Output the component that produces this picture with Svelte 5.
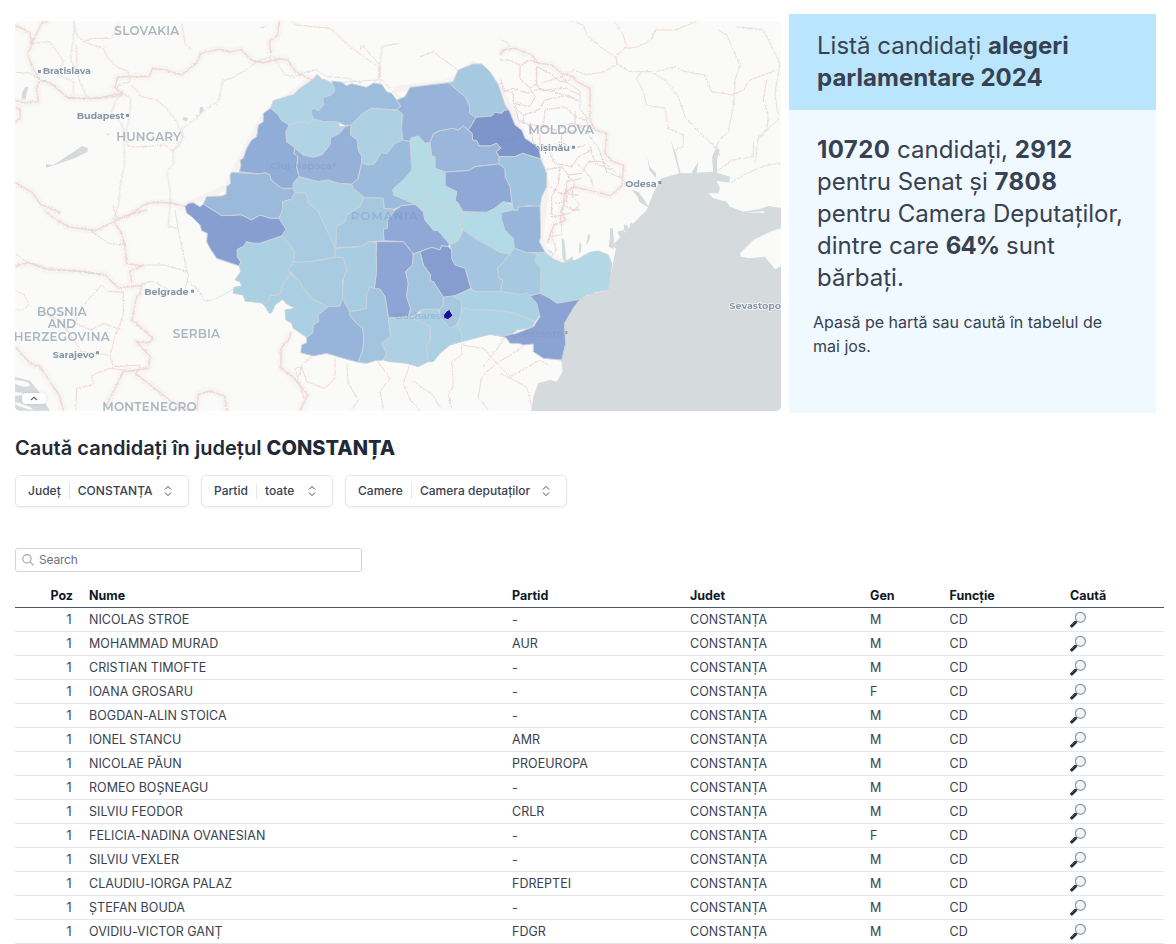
<script>
  const candidates = [
    ['NICOLAS STROE', '-', 'M'],
    ['MOHAMMAD MURAD', 'AUR', 'M'],
    ['CRISTIAN TIMOFTE', '-', 'M'],
    ['IOANA GROSARU', '-', 'F'],
    ['BOGDAN-ALIN STOICA', '-', 'M'],
    ['IONEL STANCU', 'AMR', 'M'],
    ['NICOLAE PĂUN', 'PROEUROPA', 'M'],
    ['ROMEO BOȘNEAGU', '-', 'M'],
    ['SILVIU FEODOR', 'CRLR', 'M'],
    ['FELICIA-NADINA OVANESIAN', '-', 'F'],
    ['SILVIU VEXLER', '-', 'M'],
    ['CLAUDIU-IORGA PALAZ', 'FDREPTEI', 'M'],
    ['ȘTEFAN BOUDA', '-', 'M'],
    ['OVIDIU-VICTOR GANȚ', 'FDGR', 'M'],
  ];

  const filters = [
    ['Județ', 'CONSTANȚA', 174],
    ['Partid', 'toate', 132],
    ['Camere', 'Camera deputaților', 222],
  ];

  // County outlines, grouped by the map quadrant whose origin they use.
  const north = [
    ['#b0d4e6', '272,175 280,152 340,134 360,115 400,88 411,73 425,87 440,91 455,100 465,120 455,135 428,143 431,165 415,183 402,174 392,184 400,207 388,220 355,215 328,225 305,212 295,195'],
    ['#9dbddd', '455,93 485,97 500,107 515,101 560,112 580,99 605,103 620,125 635,130 650,150 662,168 650,180 573,175 545,192 535,205 513,225 495,226 473,216 430,215 400,207 392,184 402,174 415,183 431,165 428,143 455,135 465,120'],
    ['#8fadd6', '272,175 295,195 305,212 328,225 318,245 320,275 345,290 342,310 354,320 350,350 357,380 340,400 340,415 305,415 273,390 270,375 255,368 240,372 178,365 183,345 180,330 190,325 200,295 215,270 230,260 235,225 250,215 250,190'],
    ['#b0d4e6', '328,225 355,215 388,220 400,207 430,215 473,216 480,230 495,230 480,250 452,263 450,285 425,315 400,322 370,315 350,298 320,275 318,245'],
    ['#96b1d8', '495,230 513,225 512,255 532,270 535,300 545,318 545,337 535,385 515,403 475,400 445,390 415,395 357,380 350,350 354,320 342,310 345,295 370,315 400,322 425,315 450,285 452,263 480,250'],
    ['#add1e3', '513,225 535,205 545,192 573,175 650,180 667,178 665,240 668,270 645,280 620,312 603,308 582,343 560,345 545,337 545,318 535,300 532,270 512,255'],
    ['#97b3da', '650,150 675,140 690,112 805,98 855,140 868,165 870,190 888,202 875,225 865,240 850,228 835,240 820,235 780,242 760,252 750,278 735,280 715,258 692,265 690,275 668,270 665,240 667,190 650,180 662,168'],
    ['#a5c9e1', '805,98 820,95 835,60 880,42 905,42 930,65 955,105 975,165 985,180 975,180 965,190 945,187 935,198 888,202 870,190 868,165 855,140'],
    ['#7e95cb', '888,202 935,198 945,187 965,190 975,180 987,180 1005,225 1025,240 1035,265 1065,285 1078,300 1082,327 1028,310 1005,320 957,320 948,305 962,295 950,280 930,288 898,288 890,272 878,270 876,250 865,240 875,225'],
    ['#9ab6db', '750,278 760,252 780,242 820,235 835,240 850,228 865,240 876,250 878,270 890,272 898,288 930,288 950,280 962,295 948,305 957,320 957,342 885,350 865,362 795,366 765,355 765,320 755,318'],
    ['#a0c4df', '957,320 1005,320 1028,310 1082,327 1100,370 1100,410 1085,440 1080,470 1045,467 1015,472 1013,482 1000,480 996,455 990,410 975,380 975,357 957,342'],
    ['#8fa9d6', '795,366 865,362 885,350 957,342 975,357 975,380 990,410 996,460 970,455 945,475 920,487 850,485 825,450 830,425 795,408'],
    ['#b5dbe7', '692,265 715,258 735,280 750,278 755,318 765,320 765,355 795,366 795,408 830,425 825,450 835,460 775,472 755,447 705,463 640,435 638,418 670,390 695,360 690,280'],
    ['#9bbbdc', '668,270 690,275 695,360 670,390 638,418 640,435 705,463 665,467 640,478 612,475 610,445 553,443 520,415 515,403 535,385 545,337 560,345 582,343 603,308 620,312 645,280'],
    ['#9bbadb', '155,367 240,372 255,368 270,375 273,390 305,415 340,415 345,428 335,448 308,455 308,480 297,505 270,505 240,495 215,510 185,495 125,497 70,462 80,440 125,438 138,433 140,410 152,400 150,375'],
    ['#add1e3', '357,380 415,395 445,390 475,400 515,403 520,415 553,443 540,470 500,495 495,515 470,530 468,585 465,595 415,485 385,460 378,430 345,428 340,415 340,400'],
    ['#a5c7e0', '553,443 610,445 612,475 640,478 645,485 622,512 622,535 610,537 612,572 565,575 545,590 475,592 465,595 468,585 470,530 495,515 500,495 540,470'],
    ['#a8cbe2', '345,428 378,430 385,460 415,485 465,595 465,622 395,635 340,637 343,605 332,588 305,558 318,538 297,505 308,480 308,455 335,448'],
    ['#8fa8d6', '612,572 610,537 622,535 622,512 645,480 665,467 705,463 730,485 735,510 760,540 775,542 810,578 805,590 785,587 780,600 755,592 720,605 700,612 670,575'],
    ['#b5dbe7', '705,463 755,447 775,472 835,460 848,485 850,530 835,575 810,585 775,542 760,540 735,510 730,485'],
    ['#b3dae7', '850,487 920,487 945,475 970,455 996,465 1000,478 965,488 965,510 975,540 1000,565 1003,595 990,612 960,608 930,590 880,562 850,540'],
    ['#97b4db', '965,488 1000,480 1013,482 1015,470 1080,468 1082,560 1078,575 1095,607 1040,608 1003,595 1000,565 975,540 965,510'],
    ['#8ca5d4', '590,575 670,575 700,612 698,645 677,665 685,700 680,740 692,775 685,800 625,804 615,740 600,718 583,715 590,660 588,610'],
  ];
  const southWest = [
    ['#869fd0', '15,20 25,10 40,8 60,20 70,12 125,47 185,45 215,60 240,45 270,55 297,55 318,88 305,108 240,130 218,130 200,125 190,140 172,148 172,170 182,185 178,198 140,185 110,175 90,145 80,125 82,100 65,92 60,75 35,50 20,40'],
    ['#abd0e2', '305,108 318,118 332,138 343,155 340,187 325,210 333,222 310,250 300,283 270,288 265,305 250,312 240,308 195,303 190,285 160,280 162,262 185,258 180,245 165,240 182,215 178,198 182,185 172,170 172,148 190,140 200,125 218,130 240,130'],
    ['#abd0e3', '333,222 360,245 370,265 400,298 445,320 415,345 415,365 400,375 398,400 380,412 340,385 335,370 318,360 315,330 345,325 320,312 308,298 285,315 275,338 268,340 250,312 265,305 270,288 300,283 310,250'],
    ['#a8cde2', '465,145 545,140 565,125 590,127 588,160 590,210 583,267 570,260 560,325 530,333 508,333 487,295 490,235 500,210 490,172 465,172'],
    ['#a8cbe2', '340,187 395,185 465,172 490,172 500,210 488,240 487,295 482,318 445,320 400,298 370,265 360,245 325,210'],
    ['#97b4da', '415,345 445,320 480,318 487,295 508,333 510,345 525,365 548,385 552,420 548,450 535,487 490,475 440,460 400,468 362,458 365,435 380,428 380,412 398,400 400,375 415,365'],
    ['#a2c4df', '583,265 600,268 615,290 625,353 632,410 605,430 620,460 610,480 585,482 560,490 535,487 548,450 552,420 548,385 525,365 510,345 508,333 530,333 560,325 560,285 570,260'],
  ];
  const southEast = [
    ['#b2d8e6', '440,160 465,157 490,178 520,190 540,182 555,182 600,157 625,153 655,165 665,190 660,235 655,270 620,275 590,285 570,298 500,310 480,295 450,280 453,205 435,185'],
    ['#a5c9e1', '373,145 410,158 440,160 435,185 453,205 450,282 420,287 330,275 338,240 327,235 322,205 340,185 360,162'],
    ['#a3c5df', '180,135 205,122 220,90 250,112 300,140 330,158 360,162 340,185 322,205 327,235 338,240 330,275 255,275 243,265 225,205 195,195 185,175 185,150'],
    ['#869dd0', '90,155 125,142 150,150 155,137 175,140 185,150 185,175 195,195 225,205 243,265 190,290 160,292 130,245 120,243 122,225 100,195'],
    ['#a3c4df', '70,162 90,155 100,195 122,225 120,243 130,245 160,292 160,315 150,328 95,328 75,345 58,350 62,325 50,290 55,250 47,215 68,195'],
    ['#add1e3', '-5,354 65,350 120,380 120,425 108,435 115,485 85,500 50,490 0,485 -20,480 -10,460 -25,430 2,410'],
    ['#abcfe3', '75,345 90,340 95,328 145,328 150,350 180,385 200,375 215,400 215,425 180,435 150,460 130,485 115,485 108,435 120,425 122,380 90,365 62,352'],
    ['#a5c7e0', '160,292 205,285 215,305 212,350 200,375 180,385 150,350 148,328 160,315'],
    ['#abd2e4', '190,290 243,267 255,275 330,275 400,284 408,276 420,287 440,300 450,345 435,365 370,338 300,330 250,330 215,325 212,300'],
    ['#add3e4', '215,325 250,330 300,330 370,338 435,365 425,382 380,390 340,410 300,403 215,425 215,400 200,375 212,350'],
    ['#8aa3d3', '420,287 450,280 480,295 500,310 570,298 550,325 523,370 527,430 515,480 460,475 430,455 430,432 400,435 385,430 360,430 350,415 340,408 380,400 430,380 450,350 440,310'],
    ['#12129c', '160,345 170,333 178,328 189,347 174,359 162,355'],
  ];
</script>

<main>
  <section class="top">
    <div class="map">
      <svg viewBox="-495 -87 2298 1170" preserveAspectRatio="none">
        <defs>
          <filter id="rough" x="-5%" y="-5%" width="110%" height="110%">
            <feTurbulence type="fractalNoise" baseFrequency=".2" numOctaves="2" seed="4" />
            <feDisplacementMap in="SourceGraphic" scale="9" xChannelSelector="R" yChannelSelector="G" />
          </filter>
          <g id="frontiers">
            <g transform="translate(-495 -90)">
              <path d="M0 15l45 23 5 35-12 30 15 40 22 37-10 25 5 40-45 3-28-8M75 180l35 10 50 45 90 0 50-12 25 0-25-20 8-33 95 0 10-25 40 5 45 15 45-35 15-30 55-12 35 8 30-8 35 35 30 5 55-12 20 5 25 35 50 25 20 20 35 10M50 70l30-60 25-10M0 260l15 10 0 25-15 10M0 488l50 28 28 38 60 25M768 100l-5-35 25-20 5-45" />
              <path d="M300 600l45-15 40-30 35-8 55 3 25 8 25-2" />
            </g>
            <g transform="translate(-495 480)">
              <path d="M90 0l20 20 50 30 80 12 45-22 45-22 65-18M300 40l20 30 10 40 5 50 45 8-35 15 5 35M0 168l40-10 60 22 90 2 80 12 40 40 70-8-5 25-10 10-15 70 15 10 50 45-15 12-35-3 40 45-5 35-75 10-30 60-20 40M0 410l45 50 30 10 60 90 10 43M360 490l40 30 50 40 15 13 75 40M545 603l5-50 35-10 45 15 5 45M828 365l-5 20-25 30 0 60 35 25 45 55-20 40 5 20" />
            </g>
            <g transform="translate(960 -90)">
              <path d="M0 105l10-15 35-5 50 20 20 25 40 5 30 25 35 10 10 15 40 20 0 95 15 30 35 10-5 60 20 22 35 15-3 60-35 30-60-15-50-12-30 20 0 35-10 20 15 25-35 15-20 55" />
            </g>
          </g>
        </defs>
        <rect x="-495" y="-87" width="2298" height="1170" fill="#fafaf8" />

        <g transform="translate(960 480)" fill="#d5dadc">
          <path d="M93 610L100 560 115 520 150 510 170 515 188 485 183 450 195 400 192 340 240 268 275 250 325 242 335 180 348 115 335 108 380 60 440 0 460-50 485-95 540-110 575-110 590-112 640-115 690-100 688-82 650-87 660-65 655-50 625-50 640-35 680-25 690-10 730 5 780-3 805-12 850-5V53L810 65 760 90 720 130 722 140 750 145 795 140 815 165 825 178 850 165V610Z" />
          <path d="M185 85l8 5 5 55 6 15-16 0zM205 148l12-10 5 18-34 3zM265 70l6 8-8 25-4 0zM238 95l6 10-2 25-5-2zM330 55l8 0 4 35-2 28-14-8 4-30zM352 65l20-5 0 15-12 5zM371 43l13 5-2 18-9-2zM392 38l6 2-4 12-5-3zM143 118l14 8 8 18-12 2-12-10z" />
          <path d="M395-60l20 5 18 25 15 25-30-20-5-15zM442-160l8 30 18 20 0 15-20-25zM512-210l16 42 14 60-4 0-14-55zM640-110l-4-50 15-25 8 5-8 30 0 40zM575-112l15-25 5-8-5 35z" />
          <path fill="#fafaf8" d="M735 8l25 0 35 0-5-5z" />
          <path fill="#fafaf8" d="M795 140l18-22 6 2-12 26z" opacity=".8" />
        </g>
        <g transform="translate(-495 480)" fill="#d5dadc">
          <path d="M0 500l45 12 25 30 10 20 25 40H0Z" />
          <path d="M55 458l14 4-2 8-10-3z" />
          <g fill="#fafaf8"><ellipse cx="20" cy="520" rx="25" ry="8" transform="rotate(12 20 520)" /><ellipse cx="8" cy="552" rx="16" ry="5" /><ellipse cx="25" cy="588" rx="30" ry="5" transform="rotate(20 25 588)" /></g>
        </g>
        <g transform="translate(-495 -90)" fill="#d5dadc">
          <path d="M93 433l22 2 65-42 20-15 18 5 0 12-40 20-50 17-35 11zM505 290l14 5-4 10-12-6zM541 285l10 1-4 5zM555 262l10-2 0 12-12 12zM22 215l10-15 8 0-5 20-3 20 4 10-10 2-8-12zM272 345l14-6-6 7zM733 24l20-7-10 8z" />
        </g>

        <g fill="none" filter="url(#rough)">
          <use href="#frontiers" stroke="#f7f4f2" stroke-width="22" stroke-linejoin="round" />
          <path stroke="#f7f2f0" stroke-width="18" d="M15 465L80 440 140 410 180 330 235 225 272 175 400 88M640 120L690 112 805 98 880 42 955 105 1035 265 1082 327 1100 400 1082 560 1095 607 1150 640" />
          <use href="#frontiers" stroke="#eed8d8" stroke-width="4.5" />
          <g stroke="#d3dade" stroke-width="2.3">
            <g transform="translate(-495 -90)">
              <path d="M0 157l45 2 30 20 35 15 50 40 90 2 75-10M178 0l-2 50-10 65 25 60 22 55M330 225l18 10-5 55-15 80 0 65-12 55-5 60-15 50M775 105l-50 20-25 20-50 30-25 5-15 65-35 20-35 35-40 25 5 25-30 40 0 40-20 25 10 55 0 50-5 60 30 5M775 105l15 30 20 30 30 5 35-15 30-5 30 20 65 5 40 15" />
              <path d="M940 190l150-10 10-100 50-10" />
            </g>
            <g transform="translate(-495 480)"><path d="M480 0l10 60 25 120 5 15-10 50-35 5-55-35-20 0-30 15M380 165l70 0 65 20M515 210l35 30 20 33 25-3 65-35M210 50l70 50 50 5M0 130l35 25 65 20 90 10 80 10" /></g>
            <g transform="translate(960 -90)"><path d="M200 0l50 15 10 30 40 35 45 30 10 25 35 20 65 0 45 30 35 45 20 60 40 45 50 45 15 30M0 60l20 5 10 15M655 30l25 15 20 45 20 45-15 45-5 80-15 75-30 30-15 40M710 20l80 10 25 50 25 50-15 90 10 80-60 50-10 80M690 490l50-30 60-25 43-5M180 170l60 45 0 50 20 30 5 50 30 35 15 45 60 50" /></g>
          </g>
          <g stroke="#f0d5d6" stroke-width="2.8">
            <g transform="translate(-495 -90)">
              <path d="M50 70l55-5 25 35 15 25-15 40 45 20 0 35-15 15M175 0l10 45 20 20 60 20 15 30 25 25 35 15 5 30-45 15M185 75l0 80M205 65l30-10 55 0 20-45M325 215l-25 30-10 35 30 30 20 70 40 0 70-5 20 20 20-15 15-25-20-50-30-40-30-25-45-10-30-35M500 10l10 60 20 20M825 0l20 15 100 10 50 45 50 40 45 30 5 45-10 25" />
            </g>
            <g transform="translate(-495 480)"><path d="M0 240l30 15 10 30-15 15-25 0M320 360l-55-20-35 20-50-20 20-50 60-65 20 20 45 0 0 70-25 65-15 60 10 30 80-5-5 20-85-10-55 20 5 30-50 10-5 100M90 310l50 25 60 90 80 10M295 0l15 30M300 10l-5-25M890 440l-25 20-15 40" /></g>
            <g transform="translate(960 -90)">
              <path d="M340 0l30 45 10 35-30 25 0 30-40 20-50 10-40-15-35 20-60 20M380 85l35-5 40-20 10-30 60 0 65-25M425 155l-15 20 20 40 10 40 55 10 10 60 45 20 0 35-25 10M470 155l55-15 30 15 60 10 20 50 60 10 35-15 20-30 80-30M800 180l-10 60 15 45-5 50-40 35 0 40-65 10-45 35" />
              <g stroke="#eccccf">
                <path d="M0 120l30 0 30 15 30-15 30 10M60 135l0 40 30 30 20-15 0-50 40 20 30 25 30-5M110 190l10 20 80-5 40 20M0 170l10 40 30 10 0 30 50 10 15-30-15-25M40 260l30 25 45-15 20-30 70-15 30 20M70 285l0 25 60 10 5-50 60-10 30 30 30 10M130 320l40 10 40-20 50 10M90 310l10 60 45 20 35-25 40 20 35-10M145 390l20 40 50 10 20-30 40-20M140 450l45-10 20 25 40-5 20-35 40 0M180 440l-5 50-20 40 0 50M200 465l25 20-10 40 25 30-30 25-50 10M230 430l40 40 10 30M270 380l15 50 50 20M300 400l20 55 45 20" />
                <path d="M10 215l30-10 45 15 35-15 55 15 60 20M45 250l10 50 20 10M125 375l60 10 0-45 45-10M150 500l30 20 55 5M160 550l40-5 0-60 45-10M120 340l0 35 30 15M155 595l0-50M180 600l10-45 30 15 20 0M225 270l0 40 35 25" />
              </g>
            </g>
            <path d="M845 880l0 35-30 20 5 70-15 30 10 40M850 885l60 10 40 45 80-50M950 940l-45 40-10 60 30 40M950 940l40 40 90-50 25 15M690 940l-20 60 20 50 30 30M465 925l0 60-30 30-55-20-15-45-20 5 30 100M500 940l5 60 30 50-20 30M590 930l40 55-30 40 10 50M700 995l60 40 20 40M1000 830l-90 120M1040 820l-80 50M960 970l80 40 15 60M540 0l5-15 55 60 0 40 60 60M720 20l40-15 80 60M1110 490l35 15 0 50-30 5 15 40-20 25" />
          </g>
        </g>

        <g class="labels">
          <g class="country">
            <text x="-197" y="-46" textLength="195">SLOVAKIA</text>
            <text x="-191" y="272" textLength="194">HUNGARY</text>
            <text x="1045" y="251" textLength="197">MOLDOVA</text>
            <text x="-22" y="864" textLength="142">SERBIA</text>
            <text x="-429" y="797" textLength="149">BOSNIA</text>
            <text x="-397" y="835" textLength="85">AND</text>
            <text x="-499" y="873" textLength="288">HERZEGOVINA</text>
            <text x="-233" y="1084" textLength="283">MONTENEGRO</text>
          </g>
          <g class="city">
            <path d="M-426 60h9v9h-9zM-162 192h9v9h-9zM1176 287h9v9h-9zM1435 393h9v9h-9zM33 719h9v9h-9zM-252 904h9v9h-9zM1153 843h9v9h-9z" />
            <text x="-412" y="73" textLength="145">Bratislava</text>
            <text x="-310" y="207" textLength="143">Budapest</text>
            <text x="1040" y="303" textLength="130">Chișinău</text>
            <text x="1336" y="410" textLength="94">Odesa</text>
            <text x="-107" y="735" textLength="133">Belgrade</text>
            <text x="-382" y="923" textLength="126">Sarajevo</text>
            <text x="1648" y="777" textLength="164">Sevastopol</text>
          </g>
        </g>

        <g class="counties">
          {#each north as [fill, points]}<polygon {fill} {points} />{/each}
          <g transform="translate(0 450)">
            {#each southWest as [fill, points]}<polygon {fill} {points} />{/each}
          </g>
          <g transform="translate(630 450)">
            {#each southEast as [fill, points]}<polygon {fill} {points} />{/each}
          </g>
        </g>
        <g class="labels ghost">
          <text class="wide" x="512" y="510" textLength="202">ROMANIA</text>
          <text x="272" y="356" textLength="183">Cluj-Napoca</text><path d="M458 340h9v9h-9zM1004 260h9v9h-9z" />
          <text x="992" y="860" textLength="155">Constanța</text>
          <text x="950" y="276" textLength="52">Iași</text>
          <text x="646" y="807" textLength="150">Bucharest</text>
        </g>
      </svg>
      <button class="expand" aria-label="Atribuire">
        <svg width="8" height="5" viewBox="0 0 8 5"><path d="M1 4l3-2.6L7 4" fill="none" stroke="#5f666d" stroke-width="1.2" /></svg>
      </button>
    </div>

    <aside>
      <h1>Listă candidați <b>alegeri<br />parlamentare 2024</b></h1>
      <div class="stats">
        <p class="big"><b>10720</b> candidați, <b>2912</b><br />pentru Senat și <b>7808</b><br />pentru Camera Deputaților,<br />dintre care <b class="share">64%</b> sunt<br />bărbați.</p>
        <p class="hint">Apasă pe hartă sau caută în tabelul de mai jos.</p>
      </div>
    </aside>
  </section>

  <h2>Caută candidați în județul <b>CONSTANȚA</b></h2>

  <div class="filters">
    {#each filters as [label, value, width]}
      <button style="width: {width}px">
        <span>{label}</span><i></i><span class="value">{value}</span>
        <svg width="8" height="12" viewBox="0 0 8 12"><path d="M1.2 4.2L4 1.4l2.8 2.8M1.2 7.8L4 10.6l2.8-2.8" fill="none" stroke="#4b5563" stroke-width="1" stroke-linecap="round" stroke-linejoin="round" /></svg>
      </button>
    {/each}
  </div>

  <label class="search">
    <svg width="14" height="14" viewBox="0 0 14 14"><circle cx="6" cy="5.8" r="4.2" /><path d="M9.1 8.9l3.4 3.4" /></svg>
    <input placeholder="Search" />
  </label>

  <table>
    <colgroup><col style="width: 66px" /><col style="width: 423px" /><col style="width: 178px" /><col style="width: 180px" /><col style="width: 79.5px" /><col style="width: 120.5px" /><col style="width: 102px" /></colgroup>
    <thead>
      <tr><th class="pos">Poz</th><th>Nume</th><th>Partid</th><th>Judet</th><th>Gen</th><th>Funcție</th><th>Caută</th></tr>
    </thead>
    <tbody>
      {#each candidates as [name, party, gender]}
        <tr>
          <td class="pos">1</td><td>{name}</td><td>{party}</td><td>CONSTANȚA</td><td>{gender}</td><td>CD</td>
          <td>
            <svg class="lens" width="17" height="17" viewBox="0 0 17 17">
              <path d="M7 10L5.3 11.7" stroke="#6b7585" stroke-width="1.8" />
              <path d="M5.4 11.3L1.8 14.9" stroke="#252a3a" stroke-width="3.1" stroke-linecap="round" />
              <path d="M4.5 11.4L1.6 14.2" stroke="#69738a" stroke-width=".7" />
              <circle cx="10.4" cy="6.3" r="5" fill="#f1f3f5" stroke="#8b99ab" stroke-width="1.2" />
              <path d="M7.3 6a3.4 3.4 0 0 1 3-3" fill="none" stroke="#fff" stroke-width="1.3" />
            </svg>
          </td>
        </tr>
      {/each}
    </tbody>
  </table>
</main>

<style>
  :global(body) { margin: 0; background: #fff; overflow: hidden; }
  main { box-sizing: border-box; width: 1176px; height: 944px; overflow: hidden; padding: 14px 12px 0 15px; font-family: Inter, sans-serif; color: #374151; }
  svg { display: block; }
  b { font-weight: 700; }
  .top { display: flex; gap: 8px; height: 399px; }
  .map { position: relative; width: 766px; height: 390px; margin-top: 7px; border-radius: 5px; overflow: hidden; }
  .map > svg { width: 766px; height: 390px; }
  .labels { font-family: Montserrat, Inter, sans-serif; }
  .counties polygon { stroke: #ccd1d9; stroke-width: 3; stroke-linejoin: round; }
  .country { font-size: 36px; font-weight: 600; fill: #abb6c1; }
  .city { font-size: 29px; font-weight: 700; fill: #8798aa; paint-order: stroke; stroke: #fafaf8; stroke-width: 4px; }
  .city path { stroke: none; }
  .ghost { font-size: 29px; font-weight: 600; fill: #7390bd; opacity: .34; }
  .ghost .wide { font-size: 35px; }
  .expand { position: absolute; left: 7px; bottom: 7px; width: 24px; height: 11px; padding: 0; border: 0; border-radius: 4px; background: #fff; display: grid; place-items: center; box-shadow: 0 0 3px #0002; }
  aside { width: 367px; height: 399px; background: #f0f9ff; }
  h1 { margin: 0; height: 96px; box-sizing: border-box; padding: 16px 28px; background: #bae6fd; font-size: 24px; line-height: 32px; font-weight: 400; white-space: nowrap; }
  h1 b { letter-spacing: .03px; }
  .stats { padding: 24px; }
  .big { margin: 0 0 0 4px; font-size: 24px; line-height: 32px; white-space: nowrap; }
  .big b { letter-spacing: .4px; }
  .big .share { letter-spacing: -.9px; }
  .hint { margin: 16px 0 0; font-size: 16px; line-height: 24px; }
  h2 { margin: 21px 0 0; font-size: 20px; line-height: 28px; font-weight: 600; color: #1f2937; letter-spacing: .035px; }
  h2 b { font-weight: 800; }
  .filters { display: flex; gap: 12px; margin-top: 13px; }
  .filters button { box-sizing: border-box; height: 32px; display: flex; align-items: center; padding: 0 16px 0 12px; border: 1px solid #e5e7eb; border-radius: 5px; background: #fff; box-shadow: 0 1px 2px #0000000d; font: 500 12px/16px Inter, sans-serif; letter-spacing: .02px; color: #374151; white-space: nowrap; }
  .filters i { width: 1px; height: 16px; margin: 0 8px; background: #e5e7eb; }
  .filters svg { margin-left: auto; }
  .search { box-sizing: border-box; display: flex; align-items: center; gap: 4px; width: 347px; height: 24px; margin-top: 41px; padding-left: 5px; border: 1px solid #d1d5db; border-radius: 3px; }
  .search svg { fill: none; stroke: #9ca3af; stroke-width: 1.1; }
  input { flex: 1; min-width: 0; padding: 0; border: 0; outline: 0; font: 12px/16px Inter, sans-serif; letter-spacing: -.2px; background: none; }
  input::placeholder { color: #6b7280; opacity: 1; }
  table { width: 1149px; margin-top: 12px; table-layout: fixed; border-collapse: separate; border-spacing: 0; line-height: 16px; }
  th, td { box-sizing: border-box; height: 24px; padding: 0 0 0 8px; text-align: left; vertical-align: middle; border-bottom: 1px solid #e5e7eb; font-size: 12.5px; }
  td { letter-spacing: .03px; }
  th { font-weight: 700; color: #111827; border-bottom-color: #4b5563; }
  .pos { text-align: right; padding: 0 8px 0 0; }
  td.pos { padding-right: 9.5px; }
  .lens { margin-top: -1px; }
</style>
